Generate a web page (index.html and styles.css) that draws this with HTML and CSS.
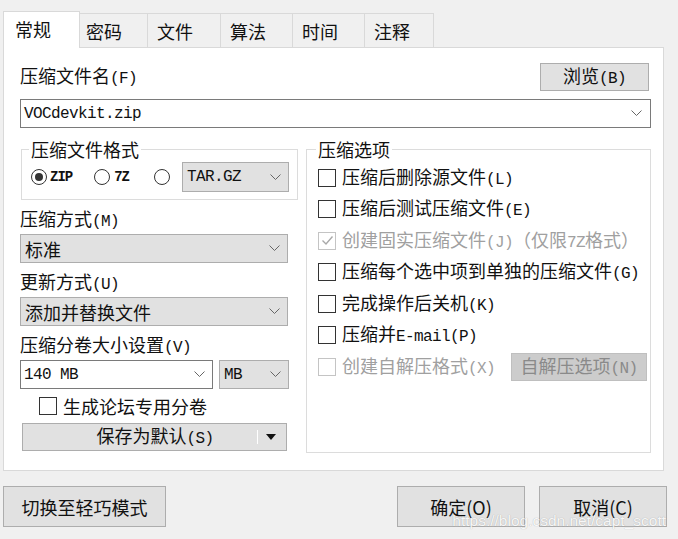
FILE: index.html
```html
<!DOCTYPE html>
<html lang="zh-CN">
<head>
  <meta charset="UTF-8" />
  <title>压缩文件名和参数</title>
  <link rel="stylesheet" href="styles.css">
</head>
<body>

  <div class="dialog">
    <!-- TABS -->
    <div class="tabs">
      <div class="tab active">常规</div>
      <div class="tab">密码</div>
      <div class="tab">文件</div>
      <div class="tab">算法</div>
      <div class="tab">时间</div>
      <div class="tab">注释</div>
    </div>

    <!-- GENERAL PANEL -->
    <div class="panel">
      <div class="file-head">
        <span>压缩文件名<span class="en">(F)</span></span>
        <button class="btn browse">浏览<span class="en">(B)</span></button>
      </div>
      <div class="combo edit file-combo">
        <span class="en">VOCdevkit.zip</span>
        <svg class="chev" width="11" height="7" viewBox="0 0 11 7"><polyline points="0.5,0.5 5.5,5.5 10.5,0.5" /></svg>
      </div>

      <div class="cols">
        <!-- left column -->
        <div class="col-left">
          <fieldset class="group format-group">
            <legend>压缩文件格式</legend>
            <div class="radio-row">
              <span class="radio checked"></span>
              <span class="en small zip">ZIP</span>
              <span class="radio"></span>
              <span class="en small z7">7Z</span>
              <span class="radio"></span>
              <div class="combo tar-combo">
                <span class="en">TAR.GZ</span>
                <svg class="chev" width="11" height="7" viewBox="0 0 11 7"><polyline points="0.5,0.5 5.5,5.5 10.5,0.5" /></svg>
              </div>
            </div>
          </fieldset>

          <div class="field-label">压缩方式<span class="en">(M)</span></div>
          <div class="combo">
            <span>标准</span>
            <svg class="chev" width="11" height="7" viewBox="0 0 11 7"><polyline points="0.5,0.5 5.5,5.5 10.5,0.5" /></svg>
          </div>

          <div class="field-label">更新方式<span class="en">(U)</span></div>
          <div class="combo">
            <span>添加并替换文件</span>
            <svg class="chev" width="11" height="7" viewBox="0 0 11 7"><polyline points="0.5,0.5 5.5,5.5 10.5,0.5" /></svg>
          </div>

          <div class="field-label">压缩分卷大小设置<span class="en">(V)</span></div>
          <div class="split-row">
            <div class="combo edit size-combo">
              <span class="en">140 MB</span>
              <svg class="chev" width="11" height="7" viewBox="0 0 11 7"><polyline points="0.5,0.5 5.5,5.5 10.5,0.5" /></svg>
            </div>
            <div class="combo unit-combo">
              <span class="en">MB</span>
              <svg class="chev" width="11" height="7" viewBox="0 0 11 7"><polyline points="0.5,0.5 5.5,5.5 10.5,0.5" /></svg>
            </div>
          </div>

          <div class="check-row forum-row">
            <span class="box"></span>
            <span>生成论坛专用分卷</span>
          </div>

          <button class="btn save-btn">
            <span class="save-text">保存为默认<span class="en">(S)</span></span>
            <span class="save-sep"></span>
            <span class="save-arrow"></span>
          </button>
        </div>

        <!-- right column -->
        <fieldset class="group options-group">
          <legend>压缩选项</legend>
          <div class="check-row"><span class="box"></span><span>压缩后删除源文件<span class="en">(L)</span></span></div>
          <div class="check-row"><span class="box"></span><span>压缩后测试压缩文件<span class="en">(E)</span></span></div>
          <div class="check-row disabled">
            <span class="box">
              <svg width="15" height="15" viewBox="0 0 15 15"><polyline points="2.5,7.5 6,11 12.5,3.5" /></svg>
            </span>
            <span>创建固实压缩文件<span class="en">(J)</span>（仅限<span class="en">7Z</span>格式）</span>
          </div>
          <div class="check-row"><span class="box"></span><span>压缩每个选中项到单独的压缩文件<span class="en">(G)</span></span></div>
          <div class="check-row"><span class="box"></span><span>完成操作后关机<span class="en">(K)</span></span></div>
          <div class="check-row"><span class="box"></span><span>压缩并<span class="en">E-mail(P)</span></span></div>
          <div class="check-row disabled">
            <span class="box"></span>
            <span>创建自解压格式<span class="en">(X)</span></span>
            <button class="btn sfx-btn" disabled>自解压选项<span class="en">(N)</span></button>
          </div>
        </fieldset>
      </div>
    </div>

    <!-- FOOTER BUTTONS -->
    <div class="footer">
      <button class="btn mode-btn">切换至轻巧模式</button>
      <button class="btn ok-btn">确定(O)</button>
      <button class="btn cancel-btn">取消(C)</button>
    </div>
  </div>

  <div class="watermark">https://blog.csdn.net/capt_scott</div>

</body>
</html>
```

FILE: styles.css
```css
/* ---------------------------------------------
   GENERAL
--------------------------------------------- */
* {
  box-sizing: border-box;
}

body {
  margin: 0;
  width: 678px;
  height: 539px;
  overflow: hidden;
  position: relative;
  background: #f0f0f0;
  color: #111;
  font-family: "Noto Sans CJK SC", "Liberation Sans", sans-serif;
  font-size: 18px;
  line-height: 22px;
}

/* half-width latin bits (SimSun style) */
.en {
  font-family: "Liberation Mono", "Noto Sans CJK SC", monospace;
  font-size: 16px;
  letter-spacing: -0.6px;
}
.en.small {
  font-size: 14px;
  letter-spacing: -1px;
  font-weight: bold;
}

.dialog {
  padding: 11px 11px 0 3px;
}

/* ---------------------------------------------
   TABS
--------------------------------------------- */
.tabs {
  display: flex;
  align-items: flex-end;
  height: 36px;
}
.tab {
  height: 34px;
  padding: 6px 0 0 9px;
  background: #f0f0f0;
  border: 1px solid #d9d9d9;
  border-bottom: none;
  border-left: none;
}
.tab:nth-child(2) { width: 68px; padding-left: 6px; }
.tab:nth-child(3) { width: 73px; }
.tab:nth-child(4) { width: 72px; }
.tab:nth-child(5) { width: 72px; }
.tab:nth-child(6) { width: 69px; }

.tab.active {
  position: relative;
  z-index: 1;
  width: 77px;
  height: 37px;
  margin-bottom: -1px;
  padding: 6px 0 0 11px;
  background: #fff;
  border-left: 1px solid #d9d9d9;
}

/* ---------------------------------------------
   PANEL
--------------------------------------------- */
.panel {
  width: 661px;
  height: 424px;
  background: #fff;
  border: 1px solid #d9d9d9;
  padding: 15px 12px 0 16px;
}

.file-head {
  display: flex;
  justify-content: space-between;
  align-items: center;
  height: 28px;
}

.btn {
  font-family: inherit;
  font-size: 18px;
  line-height: 22px;
  color: #111;
  background: #e1e1e1;
  border: 1px solid #adadad;
  padding: 0;
  margin: 0;
}
.browse {
  width: 109px;
  height: 28px;
  margin-right: 2px;
}

/* combo boxes */
.combo {
  display: flex;
  justify-content: space-between;
  align-items: center;
  width: 268px;
  height: 29px;
  padding: 0 7px 0 4px;
  background: #e1e1e1;
  border: 1px solid #adadad;
}
.combo.edit {
  background: #fff;
  border-color: #7a7a7a;
  padding-left: 3px;
}
.chev {
  flex-shrink: 0;
  fill: none;
  stroke: #666;
  stroke-width: 1;
}
.file-combo {
  width: 631px;
  margin-top: 8px;
  padding-right: 8px;
}

.cols {
  display: flex;
  gap: 8px;
  margin-top: 12px;
}

/* group boxes */
.group {
  margin: 0;
  min-width: 0;
  border: 1px solid #dcdcdc;
}
.group legend {
  padding: 0 2px;
  margin-left: -2px;
  line-height: 18px;
}

/* ---------------------------------------------
   LEFT COLUMN
--------------------------------------------- */
.col-left {
  width: 278px;
  display: flex;
  flex-direction: column;
}
.format-group {
  width: 277px;
  margin-left: 1px;
  padding: 4px 6px 7px 9px;
}
.radio-row {
  display: flex;
  align-items: center;
  height: 30px;
}
.radio {
  width: 16px;
  height: 16px;
  border: 1px solid #333;
  border-radius: 50%;
  background: #fff;
  display: flex;
  align-items: center;
  justify-content: center;
  flex-shrink: 0;
}
.radio.checked::after {
  content: "";
  width: 8px;
  height: 8px;
  border-radius: 50%;
  background: #333;
}
.zip { margin: 0 22px 0 3px; }
.z7 { margin: 0 25px 0 4px; }
.tar-combo {
  width: 107px;
  height: 30px;
  margin-left: 12px;
}

.field-label {
  height: 22px;
  margin-top: 7px;
}
.field-label + .combo,
.field-label + .split-row {
  margin-top: 5px;
}
.split-row {
  display: flex;
  gap: 6px;
}
.size-combo { width: 193px; }
.unit-combo { width: 70px; }

/* checkboxes */
.check-row {
  display: flex;
  align-items: center;
  gap: 6px;
  height: 31.5px;
}
.box {
  width: 18px;
  height: 18px;
  border: 1px solid #333;
  background: #fff;
  flex-shrink: 0;
  display: flex;
  align-items: center;
  justify-content: center;
}
.box svg {
  fill: none;
  stroke: #a8a8a8;
  stroke-width: 1.4;
}
.check-row.disabled {
  color: #a0a0a0;
}
.check-row.disabled .box {
  border-color: #c4c4c4;
}
.forum-row {
  height: 22px;
  margin-top: 6px;
  padding-left: 19px;
}

.save-btn {
  display: flex;
  align-items: center;
  width: 265px;
  height: 28px;
  margin: 6px 0 0 2px;
}
.save-text {
  flex: 1;
  text-align: center;
  padding-left: 30px;
}
.save-sep {
  width: 1px;
  height: 14px;
  background: #fff;
  margin-right: 8px;
}
.save-arrow {
  width: 0;
  height: 0;
  border-left: 5px solid transparent;
  border-right: 5px solid transparent;
  border-top: 6px solid #111;
  margin-right: 10px;
}

/* ---------------------------------------------
   RIGHT COLUMN
--------------------------------------------- */
.options-group {
  width: 345px;
  height: 313px;
  padding: 4px 3px 0 11px;
}
.sfx-btn {
  width: 136px;
  height: 28px;
  margin-left: auto;
  background: #cccccc;
  border-color: #bfbfbf;
  color: #8a8a8a;
}

/* ---------------------------------------------
   FOOTER
--------------------------------------------- */
.footer {
  display: flex;
  gap: 14px;
  margin-top: 15px;
}
.footer .btn {
  height: 41px;
  width: 128px;
}
.footer .mode-btn {
  width: 163px;
  margin-right: auto;
}

.watermark {
  position: absolute;
  right: 12px;
  bottom: 9px;
  font-family: "Liberation Sans", sans-serif;
  font-size: 15.5px;
  line-height: 18px;
  color: rgba(255, 255, 255, 0.92);
  text-shadow: 0 0 1px rgba(0, 0, 0, 0.3);
}
```
